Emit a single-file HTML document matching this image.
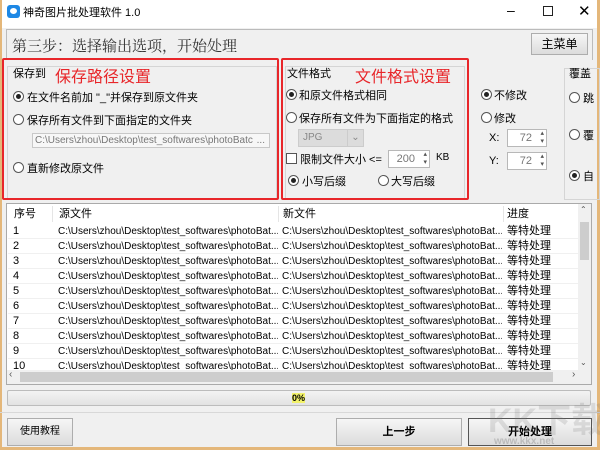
<!DOCTYPE html>
<html><head><meta charset="utf-8"><style>
*{margin:0;padding:0;box-sizing:border-box}
body{width:600px;height:450px;overflow:hidden;background:#f0f0f0;font-family:"Liberation Sans","Noto Sans CJK SC",sans-serif;font-size:11px;color:#000;position:relative}
.a{position:absolute;white-space:nowrap}
.r{position:absolute;width:11px;height:11px;border:1px solid #555;border-radius:50%;background:#fff}
.r.on::after{content:"";position:absolute;left:2px;top:2px;width:5px;height:5px;border-radius:50%;background:#222}
.btn{position:absolute;border:1px solid #adadad;background:linear-gradient(#f6f6f6,#dcdcdc);text-align:center;font-size:11px}
.red{position:absolute;border:2px solid #e8262a;border-radius:2px}
.grp{position:absolute;border:1px solid #d5d5d5}
.spin{position:absolute;border:1px solid #b8b8b8;background:#fff;color:#777;text-align:right;padding-right:14px;font-size:11px;line-height:16px;height:18px}
.spin::after{content:"▴\A▾";white-space:pre;position:absolute;right:2px;top:0;font-size:7px;line-height:8px;color:#555}
.row{position:absolute;left:8px;width:570px;height:15px;border-bottom:1px solid #f0f0f0;font-size:11px;line-height:15px}
.row span{position:absolute;overflow:hidden}
.rl{color:#e8262a;font-size:16px}
</style></head><body>
<div class="a" style="left:0;top:0;width:600px;height:28px;background:#fff"></div>
<div class="a" style="left:597px;top:0;width:3px;height:450px;background:#e4b77a"></div>
<div class="a" style="left:0;top:0;width:2px;height:450px;background:#e4b77a"></div>
<div class="a" style="left:0;top:447px;width:600px;height:3px;background:#e4b77a"></div>
<div class="a" style="left:7px;top:5px;width:13px;height:13px;border-radius:3px;background:#1e88e5"></div>
<div class="a" style="left:10px;top:8px;width:7px;height:6px;border-radius:50%;background:#fff"></div>
<div class="a" style="left:23px;top:4px;font-size:11px">神奇图片批处理软件 1.0</div>
<div class="a" style="left:507px;top:2px;font-size:14px">–</div>
<div class="a" style="left:543px;top:6px;width:10px;height:10px;border:1px solid #222"></div>
<div class="a" style="left:578px;top:2px;font-size:15px">✕</div>
<div class="a" style="left:6px;top:29px;width:587px;height:31px;border:1px solid #bbb;border-bottom:none"></div>
<div class="a" style="left:12px;top:35px;font-size:15px;color:#333;font-family:'Liberation Serif','Noto Serif CJK SC',serif">第三步：选择输出选项，开始处理</div>
<div class="btn" style="left:531px;top:33px;width:57px;height:22px;line-height:20px;font-size:12px">主菜单</div>
<div class="grp" style="left:7px;top:66px;width:270px;height:134px"></div>
<div class="grp" style="left:285px;top:66px;width:180px;height:134px"></div>
<div class="grp" style="left:564px;top:68px;width:36px;height:132px"></div>
<div class="red" style="left:2px;top:58px;width:277px;height:142px"></div>
<div class="red" style="left:281px;top:58px;width:188px;height:142px"></div>
<div class="a" style="left:13px;top:65px;font-size:11px">保存到</div>
<div class="a rl" style="left:55px;top:63px">保存路径设置</div>
<div class="r on" style="left:13px;top:91px"></div><div class="a" style="left:27px;top:89px">在文件名前加 "_"并保存到原文件夹</div>
<div class="r" style="left:13px;top:114px"></div><div class="a" style="left:27px;top:112px">保存所有文件到下面指定的文件夹</div>
<div class="a" style="left:32px;top:133px;width:238px;height:15px;border:1px solid #c8c8c8;background:#f7f7f7;color:#777;font-size:10px;line-height:13px;padding-left:2px;overflow:hidden">C:\Users\zhou\Desktop\test_softwares\photoBatch<span style="position:absolute;right:4px;background:#f7f7f7;padding-left:4px">...</span></div>
<div class="r" style="left:13px;top:162px"></div><div class="a" style="left:27px;top:160px">直新修改原文件</div>
<div class="a" style="left:287px;top:65px;font-size:11px">文件格式</div>
<div class="a rl" style="left:355px;top:63px">文件格式设置</div>
<div class="r on" style="left:286px;top:89px"></div><div class="a" style="left:299px;top:87px">和原文件格式相同</div>
<div class="r" style="left:286px;top:112px"></div><div class="a" style="left:299px;top:110px">保存所有文件为下面指定的格式</div>
<div class="a" style="left:298px;top:129px;width:66px;height:18px;background:#dcdcdc;border:1px solid #ccc;color:#888;font-size:10px;line-height:16px;padding-left:4px">JPG<span style="position:absolute;right:0;top:0;width:16px;height:16px;border-left:1px solid #ccc;text-align:center">⌄</span></div>
<div class="a" style="left:286px;top:153px;width:11px;height:11px;border:1px solid #555;background:#fff"></div>
<div class="a" style="left:300px;top:151px">限制文件大小 &lt;=</div>
<div class="spin" style="left:388px;top:150px;width:42px">200</div>
<div class="a" style="left:436px;top:152px;font-size:10px">KB</div>
<div class="r on" style="left:288px;top:175px"></div><div class="a" style="left:302px;top:173px">小写后缀</div>
<div class="r" style="left:378px;top:175px"></div><div class="a" style="left:391px;top:173px">大写后缀</div>
<div class="r on" style="left:481px;top:89px"></div><div class="a" style="left:494px;top:87px">不修改</div>
<div class="r" style="left:481px;top:112px"></div><div class="a" style="left:494px;top:110px">修改</div>
<div class="a" style="left:489px;top:132px;font-size:11px">X:</div>
<div class="spin" style="left:507px;top:129px;width:40px">72</div>
<div class="a" style="left:489px;top:155px;font-size:11px">Y:</div>
<div class="spin" style="left:507px;top:152px;width:40px">72</div>
<div class="a" style="left:569px;top:65px;font-size:11px">覆盖</div>
<div class="r" style="left:569px;top:92px"></div><div class="a" style="left:583px;top:90px">跳</div>
<div class="r" style="left:569px;top:129px"></div><div class="a" style="left:583px;top:127px">覆</div>
<div class="r on" style="left:569px;top:170px"></div><div class="a" style="left:583px;top:168px">自</div>
<div class="a" style="left:6px;top:203px;width:586px;height:182px;border:1px solid #aaa;background:#fff;overflow:hidden">
<div class="a" style="left:0;top:0;width:572px;height:20px;font-size:11px;line-height:20px">
<span class="a" style="left:7px">序号</span><span class="a" style="left:45px;top:2px;height:16px;border-left:1px solid #e5e5e5"></span>
<span class="a" style="left:52px">源文件</span><span class="a" style="left:271px;top:2px;height:16px;border-left:1px solid #e5e5e5"></span>
<span class="a" style="left:276px">新文件</span><span class="a" style="left:496px;top:2px;height:16px;border-left:1px solid #e5e5e5"></span>
<span class="a" style="left:500px">进度</span></div>
</div>
<div class="a" style="left:578px;top:204px;width:13px;height:166px;background:#f0f0f0"></div>
<div class="a" style="left:580px;top:222px;width:9px;height:38px;background:#cdcdcd"></div>
<div class="a" style="left:580px;top:205px;font-size:8px;color:#555">⌃</div>
<div class="a" style="left:580px;top:358px;font-size:8px;color:#555">⌄</div>
<div id="rows"></div>
<div class="a" style="left:7px;top:370px;width:584px;height:14px;background:#f0f0f0"></div>
<div class="a" style="left:20px;top:372px;width:533px;height:10px;background:#cdcdcd"></div>
<div class="a" style="left:9px;top:369px;font-size:10px;color:#555">‹</div>
<div class="a" style="left:572px;top:369px;font-size:10px;color:#555">›</div>
<div class="a" style="left:7px;top:390px;width:584px;height:16px;border:1px solid #bcbcbc;background:linear-gradient(#f3f3f3,#e2e2e2);border-radius:2px"></div>
<div class="a" style="left:292px;top:393px;font-size:9px;font-weight:bold;background:#f2f26a">0%</div>
<div class="a" style="left:0;top:412px;width:600px;height:1px;background:#d8d8d8"></div>
<div class="btn" style="left:7px;top:418px;width:66px;height:28px;line-height:26px;font-size:10px">使用教程</div>
<div class="btn" style="left:336px;top:418px;width:126px;height:28px;line-height:26px;font-weight:bold;font-size:11px">上一步</div>
<div class="btn" style="left:468px;top:418px;width:124px;height:28px;line-height:26px;font-weight:bold;font-size:11px;border-color:#555">开始处理</div>
<div class="a" style="left:488px;top:393px;font-size:34px;font-weight:bold;color:rgba(120,120,120,0.2)">KK下载</div>
<div class="a" style="left:494px;top:436px;font-size:10px;font-weight:bold;color:rgba(120,120,120,0.35)">www.kkx.net</div>
<script>
var h='';for(var i=1;i<=10;i++){var t=224+(i-1)*15;var p='C:\\Users\\zhou\\Desktop\\test_softwares\\photoBat...';
h+='<div class="row" style="top:'+t+'px"><span style="left:5px">'+i+'</span><span style="left:50px;width:220px;font-size:10px">'+p+'</span><span style="left:274px;width:220px;font-size:10px">'+p+'</span><span style="left:499px;font-size:11px">等特处理</span></div>';}
document.getElementById('rows').innerHTML=h;
</script>
</body></html>
